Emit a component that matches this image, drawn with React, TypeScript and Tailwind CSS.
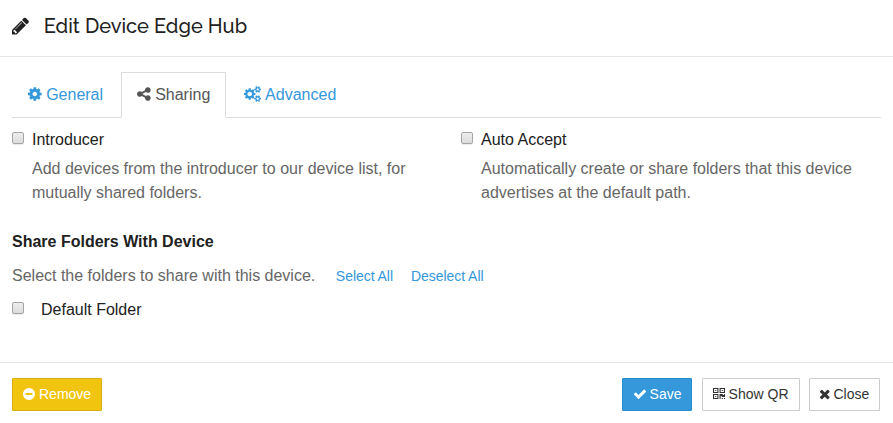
import React from "react";

type Glyph = { x: number; w: number; d: string };

const SATELLITE =
  "v140q0 16-149 31-12 27-30 52 51 113 51 138 0 4-4 7-122 71-124 71-8 0-46-47t-52-68q-20 2-30 2t-30-2q-14 21-52 68t-46 47q-2 0-124-71-4-3-4-7 0-25 51-138-18-25-30-52-149-15-149-31v-140q0-16 149-31 13-29 30-52-51-113-51-138 0-4 4-7 4-2 35-20t59-34 30-16q8 0 46 46.5t52 67.5q20-2 30-2t30 2q51-71 92-112l6-2q4 0 124 70 4 3 4 7 0 25-51 138 17 23 30 52 149 15 149 31z";

const glyphs = {
  pencil: { x: 128, w: 1536, d: "M491 1536l91-91-235-235-91 91v107h128v128h107zm523-928q0-22-22-22-10 0-17 7l-542 542q-7 7-7 17 0 22 22 22 10 0 17-7l542-542q7-7 7-17zm-54-192l416 416-832 832h-416v-416zm683 96q0 53-37 90l-166 166-416-416 166-165q36-38 90-38 53 0 91 38l235 234q37 39 37 91z" },
  cog: { x: 128, w: 1536, d: "M1152 896q0-106-75-181t-181-75-181 75-75 181 75 181 181 75 181-75 75-181zm512-109v222q0 12-8 23t-20 13l-185 28q-19 54-39 91 35 50 107 138 10 12 10 25t-9 23q-27 37-99 108t-94 71q-12 0-26-9l-138-108q-44 23-91 38-16 136-29 186-7 28-36 28h-222q-14 0-24.5-8.5t-11.5-21.5l-28-184q-49-16-90-37l-141 107q-10 9-25 9-14 0-25-11-126-114-165-168-7-10-7-23 0-12 8-23 15-21 51-66.5t54-70.5q-27-50-41-99l-183-27q-13-2-21-12.5t-8-23.5v-222q0-12 8-23t19-13l186-28q14-46 39-92-40-57-107-138-10-12-10-24 0-10 9-23 26-36 98.5-107.5t94.5-71.5q13 0 26 10l138 107q44-23 91-38 16-136 29-186 7-28 36-28h222q14 0 24.5 8.5t11.5 21.5l28 184q49 16 90 37l142-107q9-9 24-9 13 0 25 10 129 119 165 170 7 8 7 22 0 12-8 23-15 21-51 66.5t-54 70.5q26 50 41 98l183 28q13 2 21 12.5t8 23.5z" },
  share: { x: 128, w: 1536, d: "M1344 1024q133 0 226.5 93.5t93.5 226.5-93.5 226.5-226.5 93.5-226.5-93.5-93.5-226.5q0-12 2-34l-360-180q-92 86-218 86-133 0-226.5-93.5t-93.5-226.5 93.5-226.5 226.5-93.5q126 0 218 86l360-180q-2-22-2-34 0-133 93.5-226.5t226.5-93.5 226.5 93.5 93.5 226.5-93.5 226.5-226.5 93.5q-126 0-218-86l-360 180q2 22 2 34t-2 34l360 180q92-86 218-86z" },
  cogs: {
    x: -64,
    w: 1920,
    d:
      "M832 896q0-106-75-181t-181-75-181 75-75 181 75 181 181 75 181-75 75-181zm768 512q0-52-38-90t-90-38-90 38-38 90q0 53 37.5 90.5t90.5 37.5 90.5-37.5 37.5-90.5zm0-1024q0-52-38-90t-90-38-90 38-38 90q0 53 37.5 90.5t90.5 37.5 90.5-37.5 37.5-90.5zm-384 421v185q0 10-7 19.5t-16 10.5l-155 24q-11 35-32 76 34 48 90 115 7 11 7 20 0 12-7 19-23 30-82.5 89.5t-78.5 59.5q-11 0-21-7l-115-90q-37 19-77 31-11 108-23 155-7 24-30 24h-186q-11 0-20-7.5t-10-17.5l-23-153q-34-10-75-31l-118 89q-7 7-20 7-11 0-21-8-144-133-144-160 0-9 7-19 10-14 41-53t47-61q-23-44-35-82l-152-24q-10-1-17-9.5t-7-19.5v-185q0-10 7-19.5t16-10.5l155-24q11-35 32-76-34-48-90-115-7-11-7-20 0-12 7-20 22-30 82-89t79-59q11 0 21 7l115 90q34-18 77-32 11-108 23-154 7-24 30-24h186q11 0 20 7.5t10 17.5l23 153q34 10 75 31l118-89q8-7 20-7 11 0 21 8 144 133 144 160 0 8-7 19-12 16-42 54t-45 60q23 48 34 82l152 23q10 2 17 10.5t7 19.5z" +
      "M1856 1338" + SATELLITE + "M1856 314" + SATELLITE,
  },
  minus: { x: 128, w: 1536, d: "M1344 960v-128q0-26-19-45t-45-19h-768q-26 0-45 19t-19 45v128q0 26 19 45t45 19h768q26 0 45-19t19-45zm320-64q0 209-103 385.5t-279.5 279.5-385.5 103-385.5-103-279.5-279.5-103-385.5 103-385.5 279.5-279.5 385.5-103 385.5 103 279.5 279.5 103 385.5z" },
  check: { x: 0, w: 1792, d: "M1671 566q0 40-28 68l-724 724-136 136q-28 28-68 28t-68-28l-136-136-362-362q-28-28-28-68t28-68l136-136q28-28 68-28t68 28l294 295 656-657q28-28 68-28t68 28l136 136q28 28 28 68z" },
  qrcode: { x: 192, w: 1408, d: "M576 1152v128h-128v-128h128zm0-768v128h-128v-128h128zm768 0v128h-128v-128h128zm-1024 1023h384v-383h-384v383zm0-767h384v-384h-384v384zm768 0h384v-384h-384v384zm-256 256v640h-640v-640h640zm512 512v128h-128v-128h128zm256 0v128h-128v-128h128zm0-512v384h-384v-128h-128v384h-128v-640h384v128h128v-128h128zm-768-768v640h-640v-640h640zm768 0v640h-640v-640h640z" },
  times: { x: 192, w: 1408, d: "M1490 1322q0 40-28 68l-136 136q-28 28-68 28t-68-28l-294-294-294 294q-28 28-68 28t-68-28l-136-136q-28-28-28-68t28-68l294-294-294-294q-28-28-28-68t28-68l136-136q28-28 68-28t68 28l294 294 294-294q28-28 68-28t68 28l136 136q28 28 28 68t-28 68l-294 294 294 294q28 28 28 68z" },
} satisfies Record<string, Glyph>;

function Icon({ name, className }: { name: keyof typeof glyphs; className: string }) {
  const g = glyphs[name];
  return (
    <svg
      viewBox={`${g.x} 0 ${g.w} 1792`}
      preserveAspectRatio="none"
      fill="currentColor"
      aria-hidden="true"
      className={`shrink-0 ${className}`}
    >
      <path d={g.d} />
    </svg>
  );
}

function Checkbox({ label }: { label: string }) {
  return (
    <input
      type="checkbox"
      aria-label={label}
      className="block size-3 shrink-0 appearance-none rounded-[2px] border border-[#a5a5a5] bg-linear-to-b from-[#ededed] to-[#dcdcdc] shadow-[0_1px_0_#ececec]"
    />
  );
}

function Option({ label, children }: { label: string; children: React.ReactNode }) {
  return (
    <div className="flex gap-2">
      <div className="pt-1">
        <Checkbox label={label} />
      </div>
      <div>
        <div className="leading-6">{label}</div>
        <p className="mt-[5px] leading-6 text-[#666]">{children}</p>
      </div>
    </div>
  );
}

const button = "flex h-[33px] items-center rounded-[1px] border pb-[2px] text-sm";

export default function App() {
  return (
    <div className="flex h-[423px] w-[893px] flex-col bg-white font-['Liberation_Sans',Arial,sans-serif] text-base text-[#212121]">
      <header className="flex h-[57px] items-start border-b border-[#e5e5e5] pl-3">
        <Icon name="pencil" className="mt-[16px] h-5 w-[17.14px]" />
        <h1 className="ml-[14.6px] mt-[12px] whitespace-nowrap font-[Raleway,Lato,sans-serif] text-xl font-medium leading-7">
          Edit Device Edge Hub
        </h1>
      </header>

      <nav className="mx-3 mt-[15px] flex h-[46px] border-b border-[#ddd] text-[#3498db]">
        <a className="flex h-[45px] w-[109px] items-center pl-4">
          <Icon name="cog" className="mb-px h-4 w-[13.71px]" />
          <span className="ml-[4.45px]">General</span>
        </a>
        <a className="flex h-[46px] w-[105px] items-center rounded-t-[1px] border border-b-white bg-white pl-[15px] text-[#555] border-x-[#ddd] border-t-[#ddd]">
          <Icon name="share" className="mb-[2px] h-4 w-[13.71px]" />
          <span className="ml-[4.45px]">Sharing</span>
        </a>
        <a className="flex h-[45px] items-center pl-[18.3px]">
          <Icon name="cogs" className="mb-px h-4 w-[17.14px]" />
          <span className="ml-[3.7px]">Advanced</span>
        </a>
      </nav>

      <main className="px-3 pt-[10px]">
        <div className="grid grid-cols-[449px_420px]">
          <Option label="Introducer">
            Add devices from the introducer to our device list, for
            <br />
            mutually shared folders.
          </Option>
          <Option label="Auto Accept">
            Automatically create or share folders that this device
            <br />
            advertises at the default path.
          </Option>
        </div>
        <h2 className="mt-[25px] font-bold leading-6">Share Folders With Device</h2>
        <div className="mt-[10px] flex items-center leading-6">
          <p className="text-[#666]">Select the folders to share with this device.</p>
          <a className="ml-[20.6px] text-sm tracking-[-0.05px] text-[#3498db]">Select All</a>
          <a className="ml-[18px] text-sm tracking-[-0.05px] text-[#3498db]">Deselect All</a>
        </div>
        <label className="mt-[10px] flex items-start leading-6">
          <span className="pt-1">
            <Checkbox label="Default Folder" />
          </span>
          <span className="ml-[17px]">Default Folder</span>
        </label>
      </main>

      <footer className="mt-auto flex h-[61px] items-start border-t border-[#e5e5e5] pl-3 pr-[13px] pt-[15px]">
        <button className={`${button} w-[90px] border-[#d8ae13] bg-[#f1c40f] pl-[10px] text-white`}>
          <Icon name="minus" className="h-[14px] w-3" />
          <span className="ml-1">Remove</span>
        </button>
        <div className="ml-auto flex">
          <button className={`${button} w-[70px] border-[#258cd1] bg-[#3498db] pl-[10px] text-white`}>
            <Icon name="check" className="h-[14px] w-[14px]" />
            <span className="ml-[2.6px]">Save</span>
          </button>
          <button className={`${button} ml-[10px] w-[98px] border-[#ccc] bg-white pl-[10px] text-[#333]`}>
            <Icon name="qrcode" className="mt-px h-[14px] w-3" />
            <span className="ml-[3.6px]">Show QR</span>
          </button>
          <button className={`${button} ml-[9px] w-[71px] border-[#ccc] bg-white pl-[9px] text-[#333]`}>
            <Icon name="times" className="h-[14px] w-[11.5px]" />
            <span className="ml-[3px]">Close</span>
          </button>
        </div>
      </footer>
    </div>
  );
}
